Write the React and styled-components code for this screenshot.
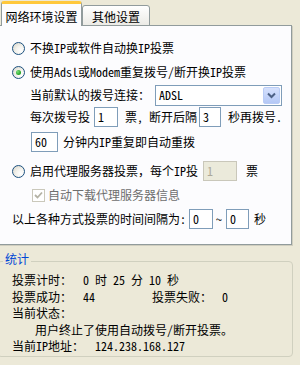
import React from "react";
import styled, { createGlobalStyle } from "styled-components";

const FONT = `"Noto Sans Mono CJK SC", "Noto Sans CJK SC", "Noto Sans", sans-serif`;

const Global = createGlobalStyle`
  html, body { margin: 0; padding: 0; background: #ECE9D8; }
  body { font-family: ${FONT}; font-size: 12px; color: #000; }
  * { box-sizing: border-box; }
`;

const Window = styled.div`
  width: 300px;
  height: 365px;
  overflow: hidden;
  background: #ECE9D8;
  display: flex;
  flex-direction: column;
`;

const TabStrip = styled.div`
  display: flex;
  align-items: flex-end;
  height: 26px;
  padding-left: 1px;
  margin-bottom: -1px;
  position: relative;
  z-index: 1;
`;

const Tab = styled.div`
  display: flex;
  align-items: center;
  justify-content: center;
  width: ${(p) => p.$w}px;
  height: ${(p) => (p.$active ? 25 : 21)}px;
  border: 1px solid #919B9C;
  border-top: ${(p) => (p.$active ? "3px solid #FFC83C" : "1px solid #919B9C")};
  border-bottom: ${(p) => (p.$active ? "none" : "1px solid #919B9C")};
  border-radius: 3px 3px 0 0;
  background: ${(p) => (p.$active ? "#FCFCFE" : "linear-gradient(#FFFFFF, #ECEBE6)")};
  padding-top: ${(p) => (p.$active ? 2 : 1)}px;
  white-space: nowrap;
`;

const Panel = styled.div`
  margin-left: -2px;
  width: 294px;
  height: 220px;
  border: 1px solid #919B9C;
  background: #FCFCFE;
  box-shadow: 1px 1px 0 #D0CEBF;
  padding: 12px 0 0 13px;
  display: flex;
  flex-direction: column;
`;

const Row = styled.div`
  display: flex;
  align-items: center;
  height: ${(p) => p.$h || 20}px;
  margin-top: ${(p) => p.$mt || 0}px;
  padding-left: ${(p) => p.$indent || 0}px;
  white-space: pre;
`;

const Text = styled.span`
  margin-left: ${(p) => p.$ml || 0}px;
  color: ${(p) => (p.$dim ? "#6E6E6E" : "#000")};
  white-space: pre;
  line-height: 14px;
`;

const RadioCircle = styled.span`
  width: 13px;
  height: 13px;
  flex: none;
  border-radius: 50%;
  border: 1px solid #1C5180;
  background: radial-gradient(circle at 70% 70%, #FFFFFF 0%, #F4F3EE 40%, #D6D3C6 100%);
  display: flex;
  align-items: center;
  justify-content: center;
  margin-right: 5px;
  &::after {
    content: "";
    display: ${(p) => (p.$checked ? "block" : "none")};
    width: 5px;
    height: 5px;
    border-radius: 50%;
    background: radial-gradient(circle at 35% 35%, #7BE07B 0%, #21A121 70%);
  }
`;

const CheckBox = styled.span`
  width: 13px;
  height: 13px;
  flex: none;
  border: 1px solid #CAC8BB;
  background: #FFFFFF;
  display: flex;
  align-items: center;
  justify-content: center;
`;

const Field = styled.div`
  width: ${(p) => p.$w}px;
  height: 20px;
  flex: none;
  margin-left: ${(p) => p.$ml || 0}px;
  border: 1px solid ${(p) => (p.$disabled ? "#C9C7BA" : "#7F9DB9")};
  background: ${(p) => (p.$disabled ? "#EBEADB" : "#FFFFFF")};
  color: ${(p) => (p.$disabled ? "#ACA899" : "#000")};
  display: flex;
  align-items: center;
  padding-left: 3px;
  line-height: 14px;
`;

const Select = styled.div`
  width: 127px;
  height: 21px;
  margin-left: 5px;
  border: 1px solid #7F9DB9;
  background: #FFFFFF;
  display: flex;
  align-items: center;
`;

const SelectText = styled.span`
  flex: 1;
  padding-left: 3px;
  line-height: 14px;
`;

const DropButton = styled.span`
  width: 17px;
  height: 17px;
  margin-right: 1px;
  border: 1px solid #B9CCF6;
  border-radius: 2px;
  background: linear-gradient(#D6E1FD, #B4C8F6);
  display: flex;
  align-items: center;
  justify-content: center;
`;

const Group = styled.div`
  position: relative;
  margin: 16px 0 0 -3px;
  width: 296px;
  height: 96px;
  border: 1px solid #D0D0BF;
  border-radius: 4px;
  padding: 10px 0 0 14px;
  display: flex;
  flex-direction: column;
`;

const Legend = styled.span`
  position: absolute;
  top: -11px;
  left: 5px;
  padding: 0 2px;
  background: #ECE9D8;
  color: #0046D5;
  line-height: 16px;
`;

const StatLine = styled.div`
  display: flex;
  align-items: center;
  height: 16.5px;
  padding-left: ${(p) => p.$indent || 0}px;
  white-space: pre;
`;

const StatCell = styled.span`
  width: ${(p) => (p.$w ? `${p.$w}px` : "auto")};
  flex: none;
  white-space: pre;
  line-height: 14px;
`;

const Chevron = () => (
  <svg width="9" height="7" viewBox="0 0 9 7">
    <path d="M1 1.5 L4.5 5 L8 1.5" fill="none" stroke="#4D6185" strokeWidth="2" />
  </svg>
);

const Check = () => (
  <svg width="9" height="9" viewBox="0 0 9 9">
    <path d="M1 4 L3.5 6.5 L8 1.5" fill="none" stroke="#B4B2A5" strokeWidth="1.8" />
  </svg>
);

export default function App() {
  return (
    <>
      <Global />
      <Window>
        <TabStrip>
          <Tab $active $w={81}>网络环境设置</Tab>
          <Tab $w={68}>其他设置</Tab>
        </TabStrip>
        <Panel>
          <Row>
            <RadioCircle />
            <Text>不换IP或软件自动换IP投票</Text>
          </Row>
          <Row $mt={4}>
            <RadioCircle $checked />
            <Text>使用Adsl或Modem重复拨号/断开换IP投票</Text>
          </Row>
          <Row $mt={2} $h={22} $indent={18}>
            <Text>当前默认的拨号连接：</Text>
            <Select>
              <SelectText>ADSL</SelectText>
              <DropButton>
                <Chevron />
              </DropButton>
            </Select>
          </Row>
          <Row $mt={1} $indent={18}>
            <Text>每次拨号投</Text>
            <Field $w={24} $ml={4}>1</Field>
            <Text $ml={7}>票, 断开后隔</Text>
            <Field $w={22} $ml={2}>3</Field>
            <Text $ml={7}>秒再拨号.</Text>
          </Row>
          <Row $mt={5} $indent={19}>
            <Field $w={27}>60</Field>
            <Text $ml={5}>分钟内IP重复即自动重拨</Text>
          </Row>
          <Row $mt={9}>
            <RadioCircle />
            <Text>启用代理服务器投票，每个IP投</Text>
            <Field $w={34} $ml={5} $disabled>1</Field>
            <Text $ml={9}>票</Text>
          </Row>
          <Row $mt={4} $indent={20}>
            <CheckBox>
              <Check />
            </CheckBox>
            <Text $ml={3} $dim>自动下载代理服务器信息</Text>
          </Row>
          <Row $mt={4}>
            <Text>以上各种方式投票的时间间隔为:</Text>
            <Field $w={24} $ml={3}>0</Field>
            <Text $ml={3}>~</Text>
            <Field $w={23} $ml={4}>0</Field>
            <Text $ml={5}>秒</Text>
          </Row>
        </Panel>
        <Group>
          <Legend>统计</Legend>
          <StatLine>
            <StatCell $w={71}>投票计时：</StatCell>
            <StatCell>0 时 25 分 10 秒</StatCell>
          </StatLine>
          <StatLine>
            <StatCell $w={71}>投票成功：</StatCell>
            <StatCell $w={69}>44</StatCell>
            <StatCell $w={70}>投票失败：</StatCell>
            <StatCell>0</StatCell>
          </StatLine>
          <StatLine>
            <StatCell>当前状态：</StatCell>
          </StatLine>
          <StatLine $indent={23}>
            <StatCell>用户终止了使用自动拨号/断开投票。</StatCell>
          </StatLine>
          <StatLine>
            <StatCell $w={83}>当前IP地址：</StatCell>
            <StatCell>124.238.168.127</StatCell>
          </StatLine>
        </Group>
      </Window>
    </>
  );
}
